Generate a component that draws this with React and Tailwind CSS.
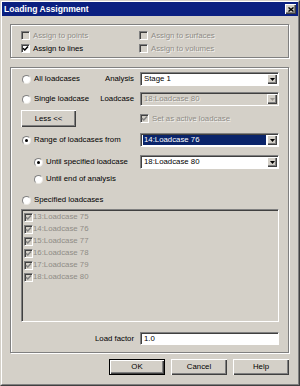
import React from 'react';

const raised = 'bg-[#d4d0c8] shadow-[inset_1px_1px_0_#ffffff,inset_-1px_-1px_0_#404040,inset_-2px_-2px_0_#808080]';
const sunken = 'border border-t-[#808080] border-l-[#808080] border-b-white border-r-white shadow-[inset_1px_1px_0_#404040]';
const dim = 'text-[#8f8c86] [text-shadow:1px_1px_0_rgba(255,255,255,0.7)]';

function Check({ checked, disabled }) {
  return (
    <span className={`inline-flex shrink-0 items-center justify-center w-[9px] h-[9px] ${sunken} ${disabled ? 'bg-[#d4d0c8]' : 'bg-white'}`}>
      {checked && (
        <svg width="7" height="7" viewBox="0 0 7 7">
          <path d="M1 3.2 L2.8 5 L6 1.5" stroke={disabled ? '#808080' : '#000'} strokeWidth="1.5" fill="none" />
        </svg>
      )}
    </span>
  );
}

function Radio({ on }) {
  return (
    <span className="inline-flex shrink-0 items-center justify-center w-[9px] h-[9px] rounded-full bg-white border border-t-[#808080] border-l-[#808080] border-b-[#ece9e4] border-r-[#ece9e4]">
      {on && <span className="w-[3px] h-[3px] rounded-full bg-black" />}
    </span>
  );
}

function Arrow({ disabled }) {
  return (
    <div className={`w-[10px] flex items-center justify-center my-[1px] mr-[1px] ${raised}`}>
      <svg width="5" height="3" viewBox="0 0 5 3">
        <path d="M0 0H5L2.5 3Z" fill={disabled ? '#9a968f' : '#000'} />
      </svg>
    </div>
  );
}

function Select({ value, disabled, selected }) {
  return (
    <div className={`flex w-[139px] h-[14px] ${sunken} ${disabled ? 'bg-[#d4d0c8]' : 'bg-white'}`}>
      <div className="flex-1 flex p-[1px] pl-[2px]">
        <span className={`flex-1 flex items-center pl-[1px] ${selected ? 'bg-[#0a246a] text-white' : disabled ? dim : ''}`}>
          {value}
        </span>
      </div>
      <Arrow disabled={disabled} />
    </div>
  );
}

function Button({ children, primary, className = '' }) {
  return (
    <button
      className={`h-[16px] flex items-center justify-center ${primary ? 'border border-black' : ''} ${raised} ${className}`}
    >
      {children}
    </button>
  );
}

const items = ['13:Loadcase 75', '14:Loadcase 76', '15:Loadcase 77', '16:Loadcase 78', '17:Loadcase 79', '18:Loadcase 80'];

export default function App() {
  return (
    <div className="w-[300px] h-[386px] bg-[#d4d0c8] border border-t-[#d4d0c8] border-l-[#d4d0c8] border-b-[#404040] border-r-[#404040] font-['Liberation_Sans',Arial,sans-serif] text-[7.8px] text-black leading-none select-none">
      <div className="h-full border border-t-white border-l-white border-b-[#808080] border-r-[#808080]">
        {/* title bar */}
        <div className="h-[14px] bg-[#0a1f80] flex items-center justify-between pl-[2px] pr-[2px]">
          <span className="text-white font-bold text-[8.6px]">Loading Assignment</span>
          <span className={`w-[11px] h-[10px] flex items-center justify-center ${raised}`}>
            <svg width="6" height="5" viewBox="0 0 6 5">
              <path d="M0.5 0.5L5.5 4.5M5.5 0.5L0.5 4.5" stroke="#000" strokeWidth="1.4" />
            </svg>
          </span>
        </div>

        <div className="px-[8px]">
          {/* assign group */}
          <div className="mt-[8px] w-[279px] h-[34px] border border-[#808080] shadow-[inset_1px_1px_0_#ffffff,1px_1px_0_#ffffff] pt-[4px] pl-[10px]">
            <div className="grid grid-cols-[118px_1fr] grid-rows-[13px_13px]">
              <div className="flex items-center gap-[3px]"><Check disabled /><span className={dim}>Assign to points</span></div>
              <div className="flex items-center gap-[3px]"><Check disabled /><span className={dim}>Assign to surfaces</span></div>
              <div className="flex items-center gap-[3px]"><Check checked /><span>Assign to lines</span></div>
              <div className="flex items-center gap-[3px]"><Check disabled /><span className={dim}>Assign to volumes</span></div>
            </div>
          </div>

          {/* loadcase group */}
          <div className="mt-[9px] w-[279px] border border-[#808080] shadow-[inset_1px_1px_0_#ffffff,1px_1px_0_#ffffff] pt-[4px] pb-[7px] pl-[10px] pr-[9px]">
            <div className="flex items-center h-[14px]">
              <div className="flex-1 flex items-center gap-[3px] pl-[1px]"><Radio /><span>All loadcases</span></div>
              <span className="mr-[6px]">Analysis</span>
              <Select value="Stage 1" />
            </div>
            <div className="flex items-center h-[14px] mt-[6px]">
              <div className="flex-1 flex items-center gap-[3px] pl-[1px]"><Radio /><span>Single loadcase</span></div>
              <span className="mr-[6px]">Loadcase</span>
              <Select value="18:Loadcase 80" disabled />
            </div>
            <div className="flex items-center h-[17px] mt-[4px]">
              <Button className="w-[55px] h-[17px]">Less &lt;&lt;</Button>
              <div className="ml-auto w-[139px] flex items-center gap-[3px]"><Check checked disabled /><span className={dim}>Set as active loadcase</span></div>
            </div>
            <div className="flex items-center h-[14px] mt-[6px]">
              <div className="flex-1 flex items-center gap-[3px] pl-[1px]"><Radio on /><span>Range of loadcases from</span></div>
              <Select value="14:Loadcase 76" selected />
            </div>
            <div className="flex items-center h-[14px] mt-[8px]">
              <div className="flex-1 flex items-center gap-[3px] pl-[13px]"><Radio on /><span>Until specified loadcase</span></div>
              <Select value="18:Loadcase 80" />
            </div>
            <div className="flex items-center h-[12px] mt-[4px]">
              <div className="flex-1 flex items-center gap-[3px] pl-[13px]"><Radio /><span>Until end of analysis</span></div>
            </div>
            <div className="flex items-center h-[12px] mt-[9px]">
              <div className="flex-1 flex items-center gap-[3px] pl-[1px]"><Radio /><span>Specified loadcases</span></div>
            </div>
            <div className="mt-[3px] h-[113px] bg-[#d4d0c8] border border-t-[#808080] border-l-[#808080] border-b-white border-r-white shadow-[inset_1px_1px_0_#404040] pl-[2px] pt-[1px]">
              {items.map((t) => (
                <div key={t} className="flex items-center h-[12px]">
                  <Check checked disabled />
                  <span className="text-[#8f8c86]">{t}</span>
                </div>
              ))}
            </div>
            <div className="flex items-center h-[13px] mt-[10px]">
              <span className="ml-auto mr-[6px]">Load factor</span>
              <div className={`w-[139px] h-[13px] bg-white flex items-center pl-[3px] ${sunken}`}>1.0</div>
            </div>
          </div>

          {/* buttons */}
          <div className="flex justify-end gap-[6px] mt-[6px] mr-[1px]">
            <Button primary className="w-[56px]">OK</Button>
            <Button className="w-[56px]">Cancel</Button>
            <Button className="w-[56px]">Help</Button>
          </div>
        </div>
      </div>
    </div>
  );
}
